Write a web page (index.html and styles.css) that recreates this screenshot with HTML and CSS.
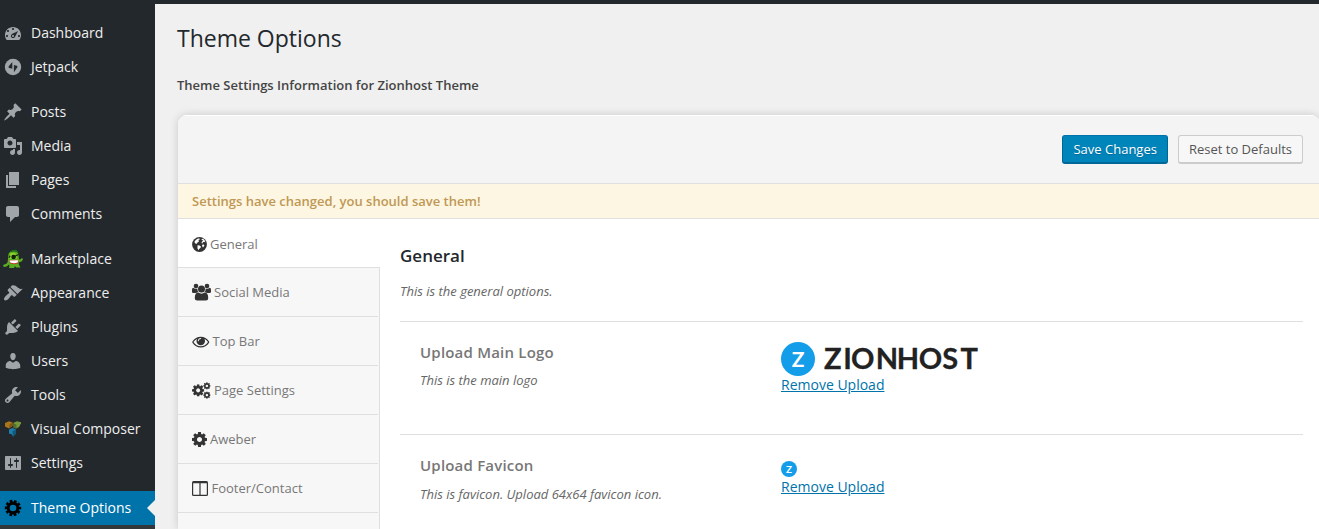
FILE: index.html
```html
<!DOCTYPE html>
<html lang="en">
<head>
<meta charset="utf-8">
<title>Theme Options</title>
<link rel="stylesheet" href="styles.css">
</head>
<body>
<svg class="defs" width="0" height="0">
  <symbol id="cog" viewBox="128 128 1536 1536"><path d="M1152 896q0-106-75-181t-181-75-181 75-75 181 75 181 181 75 181-75 75-181zm512-109v222q0 12-8 23t-20 13l-185 28q-19 54-39 91 35 50 107 138 10 12 10 25t-9 23q-27 37-99 108t-94 71q-12 0-26-9l-138-108q-44 23-91 38-16 136-29 186-7 28-36 28h-222q-14 0-24.5-8.5t-11.5-21.5l-28-184q-49-16-90-37l-141 107q-10 9-25 9-14 0-25-11-126-114-165-168-7-10-7-23 0-12 8-23 15-21 51-66.5t54-70.5q-27-50-41-99l-183-27q-13-2-21-12.5t-8-23.5v-222q0-12 8-23t19-13l186-28q14-46 39-92-40-57-107-138-10-12-10-24 0-10 9-23 26-36 98.5-107.5t94.5-71.5q13 0 26 10l138 107q44-23 91-38 16-136 29-186 7-28 36-28h222q14 0 24.5 8.5t11.5 21.5l28 184q49 16 90 37l142-107q9-9 24-9 13 0 25 10 129 119 165 170 7 8 7 22 0 12-8 23-15 21-51 66.5t-54 70.5q26 50 41 98l183 28q13 2 21 12.5t8 23.5z"/></symbol>
</svg>
<div class="topbar"></div>
<div class="layout">
  <nav class="menu">
    <a class="item"><svg class="ico" viewBox="0 0 20 20"><path d="M3.76 17h12.48c1.1-1.37 1.76-3.11 1.76-5 0-4.42-3.58-8-8-8s-8 3.58-8 8c0 1.89.66 3.63 1.76 5zM9 6c0-.55.45-1 1-1s1 .45 1 1c0 .56-.45 1-1 1s-1-.44-1-1zM4 8c0-.55.45-1 1-1s1 .45 1 1c0 .56-.45 1-1 1s-1-.44-1-1zm4.52 3.4c.84-.83 6.51-3.5 6.51-3.5s-2.66 5.68-3.49 6.51c-.84.84-2.18.84-3.02 0-.83-.83-.83-2.18 0-3.01zM3 13c0-.55.45-1 1-1s1 .45 1 1c0 .56-.45 1-1 1s-1-.44-1-1zm6 0c0 .56.45 1 1 1s1-.44 1-1c0-.55-.45-1-1-1s-1 .45-1 1zm6 0c0-.55.45-1 1-1s1 .45 1 1c0 .56-.45 1-1 1s-1-.44-1-1z"/></svg><span>Dashboard</span></a>
    <a class="item"><svg class="ico" viewBox="0 0 20 20"><circle cx="10" cy="10" r="8.200"/><path class="hole" d="M9.300 5v6.700L6.300 11q-1.300-.4-.7-1.600zM10.900 15.200V8l2.800.7q1.300.4.7 1.600z"/></svg><span>Jetpack</span></a>
    <div class="sep"></div>
    <a class="item"><svg class="ico" viewBox="0 0 20 20"><path d="M10.440 3.020l1.820-1.820 6.360 6.350-1.830 1.820c-1.050-.68-2.480-.57-3.410.36l-.75.75c-.92.93-1.040 2.350-.35 3.410l-1.830 1.820-2.410-2.410-2.800 2.790c-.42.42-3.380 2.710-3.800 2.290s1.860-3.390 2.280-3.810l2.790-2.790L4.100 9.360l1.830-1.820c1.050.69 2.480.57 3.400-.36l.75-.75c.93-.92 1.050-2.350.36-3.410z"/></svg><span>Posts</span></a>
    <a class="item"><svg class="ico" viewBox="0 0 20 20"><path d="M13 11V4c0-.55-.45-1-1-1h-1.670L9 1H5L3.670 3H2c-.55 0-1 .45-1 1v7c0 .55.45 1 1 1h10c.55 0 1-.45 1-1zM7 4.500c1.380 0 2.500 1.120 2.500 2.500S8.380 9.500 7 9.500 4.500 8.380 4.500 7 5.620 4.500 7 4.500zM14 6h5v10.500c0 1.380-1.120 2.500-2.500 2.500S14 17.880 14 16.500s1.120-2.500 2.500-2.500c.17 0 .34.02.5.05V9h-3V6zm-4 8.050V13h2v3.500c0 1.380-1.120 2.500-2.500 2.500S7 17.880 7 16.500 8.120 14 9.500 14c.17 0 .34.02.5.05z"/></svg><span>Media</span></a>
    <a class="item"><svg class="ico" viewBox="0 0 20 20"><path d="M6 15V2h10v13H6zm-1 1h8v2H3V5h2v11z"/></svg><span>Pages</span></a>
    <a class="item"><svg class="ico" viewBox="0 0 20 20"><path d="M5 2h9c1.100 0 2 .9 2 2v7c0 1.100-.9 2-2 2h-2l-5 5v-5H5c-1.100 0-2-.9-2-2V4c0-1.100.9-2 2-2z"/></svg><span>Comments</span></a>
    <div class="sep"></div>
    <a class="item"><svg class="ico monster" viewBox="0 0 20 20">
      <path fill="#5aae1f" d="M6 15.500Q3 19 .2 17.500-.4 15.500 2 15.300 5 14.500 4.800 11.500L5.500 5Q7 1.500 11 1.500t4.500 4.500l.5 4.500 1.800-.2 1.200-1.500 1 1.700-1.500 2-3 1 .3 2 1.700 3H13l-1-1.500-1 2H6l.5-2z"/>
      <path fill="#8fd02c" d="M7 4.500Q9 3.300 11.500 3.800l2.500 2.700-.5 3.500H6.500z"/>
      <path fill="#1f7020" d="M6.200 3.300Q9 0 13.500 1l2.300 3.200Q12 1.800 6.200 3.300z"/>
      <circle cx="10.600" cy="8" r="2.300" fill="#10240c"/><path d="M6 8.800l1.200-2M12 7.200l3.500-1.700" stroke="#10240c" stroke-width="1.100"/>
      <path fill="#b8402c" d="M5.800 11.200l9.900-.4-.8 3.800Q11 16 7 14.500z"/><path fill="#fff" d="M6.300 11.600l9-.3-.7 2.200Q11 14.800 7.300 13.600z"/></svg><span>Marketplace</span></a>
    <a class="item"><svg class="ico" viewBox="0 0 20 20"><path d="M14.480 11.060L7.410 3.990l1.500-1.500c.5-.56 2.300-.47 3.510.32 1.210.8 1.430 1.280 2.910 2.100 1.180.64 2.450 1.260 4.450.85zm-.71.71L6.700 4.700 4.930 6.470c-.39.39-.39 1.020 0 1.410l1.060 1.060c.39.39.39 1.030 0 1.420-.6.6-1.430 1.110-2.210 1.690-.35.26-.7.53-1.010.84C1.430 14.230.4 16.080 1.400 17.070c.99 1 2.840-.03 4.180-1.360.31-.31.58-.66.85-1.020.57-.78 1.080-1.610 1.690-2.210.39-.39 1.020-.39 1.410 0l1.060 1.060c.39.39 1.020.39 1.410 0z"/></svg><span>Appearance</span></a>
    <a class="item"><svg class="ico" viewBox="0 0 20 20"><path d="M13.110 4.360L9.870 7.600 8 5.730l3.240-3.240c.35-.34 1.050-.2 1.560.32.52.51.66 1.210.31 1.550zm-8 1.770l.91-1.120 9.010 9.010-1.190.84c-.71.71-2.630 1.160-3.820 1.160H6.140L4.900 17.260c-.59.59-1.540.59-2.120 0-.59-.58-.59-1.530 0-2.120l1.240-1.240v-3.880c0-1.130.4-3.190 1.090-3.890zm7.260 3.970l3.240-3.240c.34-.35 1.040-.21 1.550.31.52.51.66 1.210.31 1.550l-3.240 3.250z"/></svg><span>Plugins</span></a>
    <a class="item"><svg class="ico" viewBox="0 0 20 20"><path d="M10 9.250c-2.270 0-2.730-3.440-2.730-3.440C7 4.020 7.820 2 9.970 2c2.160 0 2.980 2.020 2.710 3.810 0 0-.41 3.440-2.680 3.440zm0 2.570L12.720 10c2.390 0 4.520 2.330 4.520 4.530v2.490s-3.650 1.130-7.240 1.130c-3.650 0-7.240-1.130-7.240-1.130v-2.490c0-2.250 1.940-4.480 4.470-4.480z"/></svg><span>Users</span></a>
    <a class="item"><svg class="ico" viewBox="0 0 20 20"><path d="M16.680 9.770c-1.340 1.340-3.300 1.670-4.950.99l-5.410 6.520c-.99.99-2.590.99-3.580 0s-.99-2.590 0-3.570l6.520-5.420c-.68-1.650-.35-3.610.99-4.950 1.280-1.280 3.120-1.620 4.720-1.060l-2.890 2.890 2.820 2.820 2.860-2.870c.53 1.580.18 3.390-1.080 4.650zM3.810 16.210c.4.39 1.040.39 1.430 0 .4-.4.4-1.040 0-1.430-.39-.4-1.030-.4-1.430 0-.39.39-.39 1.030 0 1.430z"/></svg><span>Tools</span></a>
    <a class="item"><svg class="ico" viewBox="0 0 20 20">
      <path fill="#a9761a" d="M2 4l4-1.800 3.500 1.300V7L6 9.500 2 7.500z"/><path fill="#83571a" d="M6.500 5.500l3-2V7L6 9.500z"/>
      <path fill="#78963a" d="M10.500 3.800L14 2.200l4 1v1L16 8l-3 1.500-2.500-1z"/><path fill="#52702e" d="M10.500 4.500l3 1v4l-3-1z"/>
      <path fill="#1d7fae" d="M6 10.500l3.500-1.600 3.500 1.500v4l-3 3.400-1-2.300-3-1z"/><path fill="#13587e" d="M9.500 12l3.500-1.600v4l-3 3.400z"/></svg><span>Visual Composer</span></a>
    <a class="item"><svg class="ico" viewBox="0 0 20 20"><path d="M18 16V4c0-.55-.45-1-1-1H3c-.55 0-1 .45-1 1v12c0 .55.45 1 1 1h14c.55 0 1-.45 1-1zM8 11h1c.55 0 1 .45 1 1s-.45 1-1 1H8v1.500c0 .28-.22.5-.5.5s-.5-.22-.5-.5V13H6c-.55 0-1-.45-1-1s.45-1 1-1h1V5.500c0-.28.22-.5.5-.5s.5.22.5.5V11zm5-2h-1c-.55 0-1-.45-1-1s.45-1 1-1h1V5.500c0-.28.22-.5.5-.5s.5.22.5.5V7h1c.55 0 1 .45 1 1s-.45 1-1 1h-1v5.500c0 .28-.22.5-.5.5s-.5-.22-.5-.5V9z"/></svg><span>Settings</span></a>
    <div class="sep"></div>
    <a class="item current"><svg class="ico" viewBox="0 0 20 20"><circle cx="10" cy="10" r="4.900" fill="none" stroke="#000" stroke-width="3.200"/><circle cx="10" cy="10" r="7.100" fill="none" stroke="#000" stroke-width="2.200" stroke-dasharray="2.700 1.761" stroke-dashoffset="1.350"/></svg><span>Theme Options</span></a>
    <div class="submenu"></div>
  </nav>
  <main class="page">
    <h1>Theme Options</h1>
    <p class="info">Theme Settings Information for Zionhost Theme</p>
    <section class="panel">
      <header class="actions"><button class="btn primary">Save Changes</button><button class="btn">Reset to Defaults</button></header>
      <div class="notice">Settings have changed, you should save them!</div>
      <div class="columns">
        <ul class="tabs">
          <li class="active"><svg width="15" height="15" viewBox="0 0 15 15"><circle cx="7.500" cy="7.500" r="7.400"/><path fill="#fff" d="M2.600 4.200L5 2l2.300-.7.5 1.100-1.600.6.9.9-1 1.400-1.500.7.500.9-1.300-.1-1.100-1zM9.200 2l2-.2 1.700 1.900.5 1.900-1.100-.8-1.400.5-.5 1.300-1-.6.6-1.500 1.100-.8zM5.500 8.200l2.200.3 1.300 1.200-.6 1.400-1.300.8-.6 1.300-1-1.600zM10.200 7.700l1.700-.3.500 1-1.400 2-.9-1.300z"/></svg><span>General</span></li>
          <li><svg width="19" height="18" viewBox="0 0 19 18"><circle cx="4" cy="3" r="2.300"/><circle cx="15" cy="3" r="2.300"/><circle cx="9.500" cy="6" r="3.500"/><path d="M0 9V7q0-2.200 1.300-2.200Q3 6.200 5.300 5.400q0 2.200 1.200 3.600Q5 9 4.100 10H1.500Q0 10 0 9zM19 9V7q0-2.200-1.300-2.200-1.700 1.400-4 .6 0 2.200-1.200 3.600 1.500 0 2.400 1h2.600Q19 10 19 9zM2.800 15q0-5.500 3.500-5.500 3.200 2.300 6.400 0 3.500 0 3.500 5.500 0 2.500-2.500 2.500H5.300q-2.500 0-2.500-2.500z"/></svg><span>Social Media</span></li>
          <li><svg width="17.500" height="17" viewBox="0 0 1792 1792"><path d="M1664 960q-152-236-381-353 61 104 61 225 0 185-131.500 316.500t-316.500 131.500-316.500-131.500-131.500-316.500q0-121 61-225-229 117-381 353 133 205 333.500 326.500t434.500 121.500 434.500-121.500 333.500-326.500zm-720-384q0-20-14-34t-34-14q-125 0-214.500 89.500t-89.500 214.500q0 20 14 34t34 14 34-14 14-34q0-86 61-147t147-61q20 0 34-14t14-34zm848 384q0 34-20 69-140 230-376.500 368.500t-499.500 138.500-499.500-139-376.500-368q-20-35-20-69t20-69q140-229 376.500-368t499.500-139 499.500 139 376.500 368q20 35 20 69z"/></svg><span>Top Bar</span></li>
          <li><svg width="19" height="17" viewBox="0 0 19 17"><use href="#cog" x="0" y="2.200" width="12.300" height="12.300"/><use href="#cog" x="11.200" y="0.200" width="7.400" height="7.400"/><use href="#cog" x="11.200" y="9.400" width="7.400" height="7.400"/></svg><span>Page Settings</span></li>
          <li><svg width="15" height="15" viewBox="0 0 15 15"><use href="#cog" width="15" height="15"/></svg><span>Aweber</span></li>
          <li><svg width="16.500" height="15" viewBox="0 0 16.500 15"><rect width="16" height="15" rx="1.500"/><path fill="#f7f7f7" d="M1.200 2.300h6.200v11.400H1.200zM8.600 2.300h6.200v11.400H8.600z"/></svg><span>Footer/Contact</span></li>
          <li></li>
        </ul>
        <div class="content">
          <h2>General</h2>
          <p class="lead">This is the general options.</p>
          <div class="row">
            <div class="label"><h3>Upload Main Logo</h3><p>This is the main logo</p></div>
            <div class="field"><svg width="220" height="34" viewBox="0 0 220 34"><circle cx="17" cy="17" r="17" fill="#149de9"/><text class="zmark" x="17" y="24.500" text-anchor="middle">Z</text><text class="brand" x="43 62.200 70 94.800 115.800 137.700 161.300 179.600" y="27">ZIONHOST</text></svg><a>Remove Upload</a></div>
          </div>
          <div class="row favicon">
            <div class="label"><h3>Upload Favicon</h3><p>This is favicon. Upload 64x64 favicon icon.</p></div>
            <div class="field"><svg width="16" height="16" viewBox="0 0 34 34"><circle cx="17" cy="17" r="17" fill="#149de9"/><text class="zmark" x="17" y="24.500" text-anchor="middle">Z</text></svg><a>Remove Upload</a></div>
          </div>
        </div>
      </div>
    </section>
  </main>
</div>
</body>
</html>
```
FILE: styles.css
```css
* { box-sizing: border-box; }
html, body { height: 100%; overflow: hidden; }
body { margin: 0; background: #f0f0f0; font-family: "Open Sans", sans-serif; font-size: 13px; color: #444; display: flex; flex-direction: column; }
h1, h2, h3, p, ul { margin: 0; padding: 0; }
.defs { display: none; }
.topbar { height: 4px; flex: none; background: #23282d; }
.layout { display: flex; flex: 1; min-height: 0; }

.menu { width: 155px; flex: none; background: #23282d; padding-top: 12px; display: flex; flex-direction: column; }
.item { display: flex; flex: none; align-items: center; gap: 8px; height: 34px; padding-left: 3px; color: #eee; font-size: 14px; line-height: 18px; white-space: nowrap; position: relative; }
.ico { width: 20px; height: 20px; flex: none; fill: #a0a5aa; }
.monster { overflow: visible; }
.hole { fill: #23282d; }
.sep { height: 11px; flex: none; }
.current { background: #0073aa; color: #fff; }
.current::after { content: ""; position: absolute; right: 0; top: 9px; border: 8px solid transparent; border-left: 0; border-right-color: #f0f0f0; }
.submenu { flex: 1; background: #32373c; }

.page { flex: 1; min-width: 0; padding: 19px 0 0 22px; display: flex; flex-direction: column; }
h1 { font-size: 23px; font-weight: 400; line-height: 30px; color: #23282d; }
.info { margin-top: 23px; font-size: 13px; font-weight: 600; line-height: 18px; }
.panel { width: 1142px; flex: 1; min-height: 0; margin: 21px 0 0 1px; background: #fff; border-radius: 9px 9px 0 0; box-shadow: 0 0 8px rgba(0,0,0,.17); overflow: hidden; display: flex; flex-direction: column; }
.actions { height: 68px; flex: none; background: #f4f4f4; border-top: 1px solid #fff; padding: 19px 17px 0 0; display: flex; justify-content: flex-end; align-items: flex-start; gap: 10px; }
.btn { height: 29px; padding: 1px 10px 0; border: 1px solid #ccc; border-bottom-width: 2px; border-radius: 3px; background: #f7f7f7; color: #555; font: 13px/25px "Open Sans", sans-serif; white-space: nowrap; }
.primary { background: #0085ba; border-color: #0073aa #006799 #006799; color: #fff; text-shadow: 0 1px 1px #006799; }
.notice { height: 36px; flex: none; border: solid #dfdfdf; border-width: 1px 0; background: #fdf6e3; color: #c09853; font-weight: 600; line-height: 34px; padding-left: 14px; }
.columns { display: flex; flex: 1; min-height: 0; }
.tabs { width: 202px; flex: none; list-style: none; background: #f7f7f7; border-right: 1px solid #dfdfdf; color: #777; display: flex; flex-direction: column; }
.tabs li { height: 49px; flex: none; padding: 0 0 0 14px; border-bottom: 1px solid #dfdfdf; display: flex; align-items: center; gap: 3px; white-space: nowrap; }
.tabs li:last-child { flex: 1; height: auto; border-bottom: 0; }
.tabs li:not(.active) { margin-right: 1px; }
.tabs svg { fill: #333; flex: none; }
.tabs .active { background: #fff; margin-right: -1px; padding-top: 2px; position: relative; }
.content { flex: 1; padding: 26px 17px 0 20px; }
h2 { font-size: 17px; font-weight: 600; line-height: 22px; color: #23282d; }
.lead { margin-top: 15px; font-style: italic; line-height: 18px; color: #666; }
.lead + .row { margin-top: 21px; }
.row { height: 113px; border-top: 1px solid #dfdfdf; padding: 20px 0 0 20px; display: flex; }
.row.favicon { height: 94px; }
.label { width: 361px; flex: none; margin-top: -1px; }
h3 { font-size: 15px; font-weight: 600; line-height: 22px; letter-spacing: .2px; color: #777; }
.label p { margin-top: 8px; font-style: italic; line-height: 18px; color: #666; }
.favicon .label p { margin-top: 9px; }
.field { display: flex; flex-direction: column; align-items: flex-start; color: #0073aa; font-size: 14px; line-height: 18px; }
.favicon .field { padding-top: 6px; gap: 1px; }
.field a { text-decoration: underline; }
.zmark { font: 700 21px Lato, sans-serif; fill: #fff; }
.brand { font: 700 29px Lato, sans-serif; fill: #222; stroke: #222; stroke-width: .3px; }
```
